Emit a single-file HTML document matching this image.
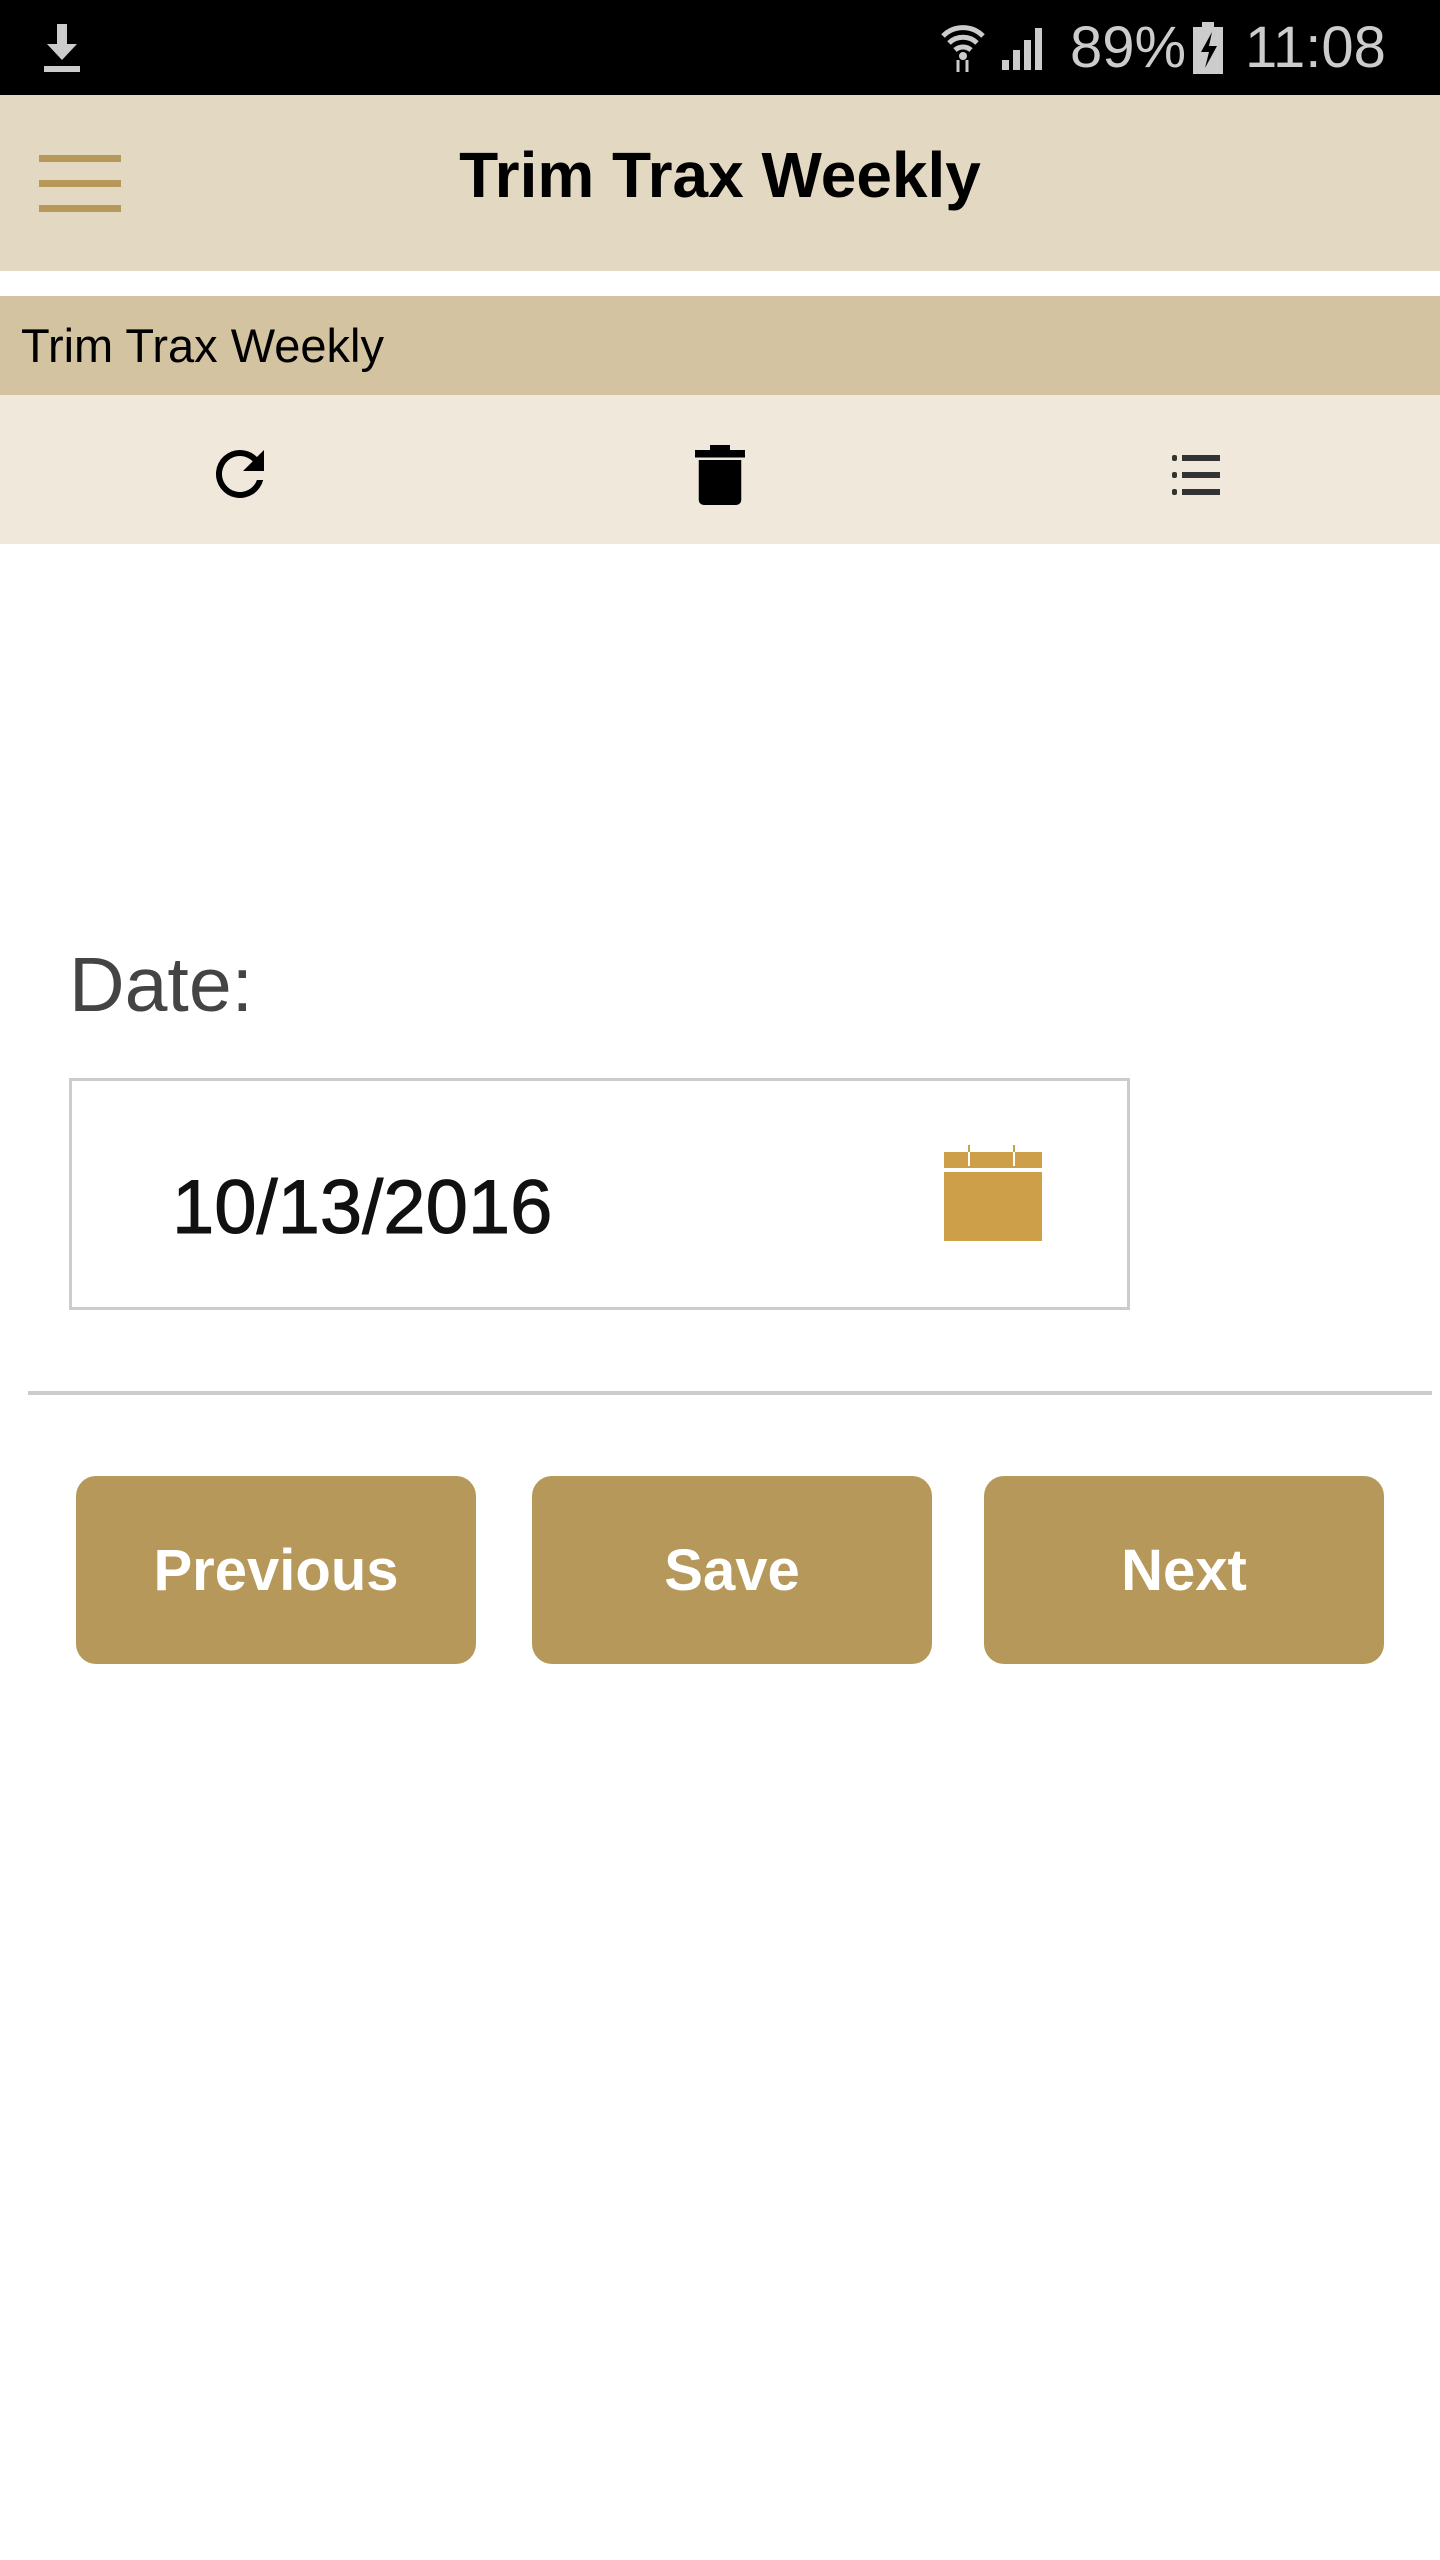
<!DOCTYPE html>
<html><head><meta charset="utf-8"><style>
*{margin:0;padding:0;box-sizing:border-box}
body{width:1440px;height:2560px;background:#fff;font-family:"Liberation Sans",sans-serif;position:relative;overflow:hidden}
.a{position:absolute}
.btn{position:absolute;top:1476px;height:188px;width:400px;background:#b5985a;border-radius:20px;color:#fff;font-weight:bold;font-size:58px;display:flex;align-items:center;justify-content:center}
</style></head><body>
<div class="a" style="left:0;top:0;width:1440px;height:95px;background:#000"></div>
<svg class="a" style="left:40px;top:22px" width="44" height="52" viewBox="0 0 44 52"><path d="M17 2h10v20h10L22 38 7 22h10z" fill="#ccc"/><rect x="4" y="44" width="36" height="6" fill="#ccc"/></svg>
<svg class="a" style="left:940px;top:22px" width="46" height="52" viewBox="0 0 46 52"><path d="M3 14a28 28 0 0 1 40 0M9 21a20 20 0 0 1 28 0M15 28a12 12 0 0 1 16 0" stroke="#ccc" stroke-width="5" fill="none"/><circle cx="23" cy="34" r="4" fill="#ccc"/><path d="M18 38v12M27 38v12" stroke="#ccc" stroke-width="3"/></svg>
<svg class="a" style="left:1000px;top:22px" width="52" height="50" viewBox="0 0 52 50"><rect x="2" y="38" width="7" height="10" fill="#ccc"/><rect x="13" y="28" width="7" height="20" fill="#ccc"/><rect x="24" y="18" width="7" height="30" fill="#ccc"/><rect x="35" y="6" width="7" height="42" fill="#ccc"/></svg>
<div class="a" style="left:1070px;top:14px;font-size:58px;color:#ccc">89%</div>
<svg class="a" style="left:1192px;top:22px" width="32" height="52" viewBox="0 0 32 52"><rect x="10" y="0" width="12" height="6" fill="#ccc"/><rect x="1" y="5" width="30" height="47" fill="#ccc"/><path d="M20 10L9 30h8l-4 16 12-22h-8z" fill="#000"/></svg>
<div class="a" style="left:1245px;top:14px;font-size:58px;color:#ccc">11:08</div>
<div class="a" style="left:0;top:95px;width:1440px;height:176px;background:#e3d9c2"></div>
<div class="a" style="left:39px;top:155px;width:82px;height:7px;background:#b5985a"></div>
<div class="a" style="left:39px;top:180px;width:82px;height:7px;background:#b5985a"></div>
<div class="a" style="left:39px;top:205px;width:82px;height:7px;background:#b5985a"></div>
<div class="a" style="left:0;top:140px;width:1440px;text-align:center;font-weight:bold;font-size:64px;line-height:70px;color:#000">Trim Trax Weekly</div>
<div class="a" style="left:0;top:296px;width:1440px;height:99px;background:#d3c3a0"></div>
<div class="a" style="left:21px;top:320px;font-size:47px;line-height:52px;color:#000">Trim Trax Weekly</div>
<div class="a" style="left:0;top:395px;width:1440px;height:149px;background:#f0e8db"></div>
<svg class="a" style="left:204px;top:438px" width="72" height="72" viewBox="0 0 24 24"><path d="M17.65 6.35A7.96 7.96 0 0 0 12 4a8 8 0 1 0 7.73 10h-2.08A6 6 0 1 1 12 6c1.66 0 3.14.69 4.22 1.78L13 11h7V4z" fill="#000"/></svg>
<svg class="a" style="left:690px;top:442px" width="60" height="66" viewBox="0 0 24 26"><path d="M8 1h8v2h6v3H2V3h6z M3.5 7h17v16a2 2 0 0 1-2 2h-13a2 2 0 0 1-2-2z" fill="#000"/></svg>
<svg class="a" style="left:1172px;top:452px" width="56" height="46" viewBox="0 0 56 46"><rect x="0" y="3" width="5" height="6" rx="2" fill="#333"/><rect x="0" y="20" width="5" height="6" rx="2" fill="#333"/><rect x="0" y="37" width="5" height="6" rx="2" fill="#333"/><rect x="10" y="3" width="38" height="6" fill="#333"/><rect x="10" y="20" width="38" height="6" fill="#333"/><rect x="10" y="37" width="38" height="6" fill="#333"/></svg>
<div class="a" style="left:69px;top:943px;font-size:77px;line-height:84px;color:#444">Date:</div>
<div class="a" style="left:69px;top:1078px;width:1061px;height:232px;border:3px solid #ccc"></div>
<div class="a" style="left:172px;top:1168px;font-size:76px;line-height:80px;color:#111;-webkit-text-stroke:1px #111">10/13/2016</div>
<div class="a" style="left:944px;top:1152px;width:98px;height:89px;background:#cc9f48"></div>
<div class="a" style="left:944px;top:1168px;width:98px;height:4px;background:#fff"></div>
<div class="a" style="left:968px;top:1145px;width:2px;height:20px;background:#cc9f48"></div>
<div class="a" style="left:1013px;top:1145px;width:2px;height:20px;background:#cc9f48"></div>
<div class="a" style="left:968px;top:1152px;width:2px;height:14px;background:#fff"></div>
<div class="a" style="left:1013px;top:1152px;width:2px;height:14px;background:#fff"></div>
<div class="a" style="left:28px;top:1391px;width:1404px;height:4px;background:#ccc"></div>
<div class="btn" style="left:76px">Previous</div>
<div class="btn" style="left:532px">Save</div>
<div class="btn" style="left:984px">Next</div>
</body></html>
